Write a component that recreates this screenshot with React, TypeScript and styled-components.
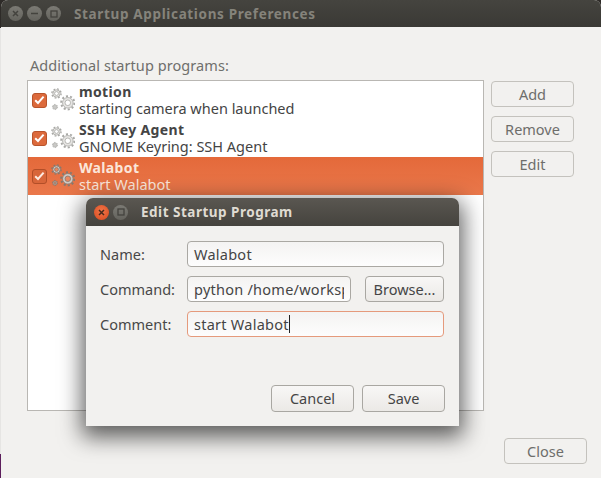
import React from "react";
import styled, { createGlobalStyle } from "styled-components";

const Global = createGlobalStyle`
  html, body { margin: 0; padding: 0; background: #f2f1ef; }
  #root { width: 601px; height: 478px; overflow: hidden; }
  * { box-sizing: border-box; }
`;

const Desktop = styled.div`
  position: relative;
  width: 601px;
  height: 478px;
  overflow: hidden;
  background: linear-gradient(180deg, #2e2b28 0 28px, #e6e5e3 28px 454px, #5c1e5c 454px);
  padding-left: 1px;
  font-family: "Noto Sans", "Open Sans", sans-serif;
  font-size: 14.5px;
  color: #3c3c3c;
`;

const MainWindow = styled.div`
  display: flex;
  flex-direction: column;
  width: 600px;
  height: 478px;
  background: #f2f1ef;
  border-radius: 7px 7px 0 0;
  overflow: hidden;
`;

const TitleBar = styled.div<{ $active?: boolean }>`
  display: flex;
  align-items: center;
  flex: none;
  height: ${(p) => (p.$active ? 28 : 27)}px;
  padding-left: ${(p) => (p.$active ? 8 : 7)}px;
  gap: 3px;
  background: ${(p) =>
    p.$active
      ? "linear-gradient(180deg, #5a5751, #45433e)"
      : "linear-gradient(180deg, #45443f, #3a3935)"};
`;

const TitleText = styled.span<{ $active?: boolean }>`
  margin-left: 10px;
  font-weight: 700;
  font-size: 13.5px;
  letter-spacing: ${(p) => (p.$active ? 0.5 : 0.65)}px;
  color: ${(p) => (p.$active ? "#dfdbd2" : "#85837b")};
`;

const WinBtn = styled.span<{ $kind: "closeDim" | "dim" | "closeActive" }>`
  display: flex;
  align-items: center;
  justify-content: center;
  width: 15px;
  height: 15px;
  border-radius: 50%;
  background: ${(p) =>
    p.$kind === "closeActive"
      ? "radial-gradient(circle at 50% 40%, #f0764a, #d9481c)"
      : "linear-gradient(180deg, #7b7a74, #64635d)"};
  & + & {
    margin-left: 1px;
  }
`;

const Body = styled.div`
  display: flex;
  flex-direction: column;
  flex: 1;
  padding: 28px 14px 15px 26px;
`;

const SectionLabel = styled.div`
  height: 25px;
  padding-left: 3px;
  color: #6f6f6c;
  font-size: 14.5px;
  letter-spacing: 0.07px;
  line-height: 20px;
`;

const Columns = styled.div`
  display: flex;
  gap: 7px;
  height: 331px;
`;

const List = styled.div`
  width: 457px;
  height: 331px;
  background: #fff;
  border: 1px solid #b9b7b3;
`;

const Row = styled.div<{ $selected?: boolean }>`
  display: flex;
  align-items: center;
  height: 38px;
  padding-left: 4px;
  background: ${(p) => (p.$selected ? "linear-gradient(180deg, #e4693a, #ea784b)" : "transparent")};
  color: ${(p) => (p.$selected ? "#fbe6da" : "#444")};
`;

const Check = styled.span<{ $selected?: boolean }>`
  display: flex;
  flex: none;
  align-items: center;
  justify-content: center;
  width: 15px;
  height: 15px;
  border-radius: 3px;
  background: ${(p) => (p.$selected ? "#d8663a" : "#dc6a3c")};
  border: 1px solid ${(p) => (p.$selected ? "#b24e28" : "#b8542c")};
`;

const RowIcon = styled.span`
  display: flex;
  flex: none;
  width: 24px;
  height: 24px;
  margin: 0 4px;
`;

const RowText = styled.div`
  display: flex;
  flex-direction: column;
  line-height: 17px;
  font-size: 14.5px;
`;

const RowName = styled.strong`
  font-weight: 700;
  font-size: 14px;
  letter-spacing: 0.35px;
`;

const RowDesc = styled.span``;

const SideButtons = styled.div`
  display: flex;
  flex-direction: column;
  gap: 9px;
  padding-top: 1px;
`;

const Button = styled.button<{ $w?: number; $dim?: boolean; $tall?: boolean }>`
  width: ${(p) => p.$w ?? 83}px;
  height: ${(p) => (p.$tall ? 27 : 26)}px;
  padding: 0 0 ${(p) => (p.$tall ? 2 : 0)}px;
  border: 1px solid ${(p) => (p.$dim ? "#c4c2bd" : "#a9a7a2")};
  border-radius: 4px;
  background: ${(p) =>
    p.$dim ? "#f2f1ef" : "linear-gradient(180deg, #f8f7f6, #ebe9e6)"};
  color: ${(p) => (p.$dim ? "#6e6e6b" : "#454545")};
  font-family: inherit;
  font-size: 14.5px;
  line-height: 22px;
`;

const BrowseButton = styled(Button)`
  margin-left: 14px;
`;

const Footer = styled.div`
  display: flex;
  justify-content: flex-end;
  margin-top: 27px;
`;

const Dialog = styled.div`
  position: absolute;
  left: 86px;
  top: 198px;
  display: flex;
  flex-direction: column;
  width: 373px;
  height: 228px;
  background: #f2f1ef;
  border-radius: 7px 7px 0 0;
  box-shadow: 0 7px 22px 4px rgba(0, 0, 0, 0.62);
  overflow: hidden;
`;

const Form = styled.div`
  display: flex;
  flex-direction: column;
  flex: 1;
  gap: 9px;
  padding: 15px 14px 14px 14px;
`;

const FormRow = styled.div`
  display: flex;
  align-items: center;
  height: 26px;
`;

const FieldLabel = styled.span`
  flex: none;
  width: 87px;
  color: #484848;
  font-size: 14.5px;
`;

const Input = styled.div<{ $focus?: boolean; $w: number }>`
  display: flex;
  align-items: center;
  width: ${(p) => p.$w}px;
  height: 26px;
  padding: 0 6px;
  border: 1px solid ${(p) => (p.$focus ? "#e59a7c" : "#aaa8a3")};
  border-radius: 4px;
  background: linear-gradient(180deg, #f4f3f2, #fdfdfd);
  color: #454545;
  font-size: 14.5px;
  letter-spacing: 0.25px;
  white-space: nowrap;
`;

const InputText = styled.span`
  min-width: 0;
  overflow: hidden;
`;

const Caret = styled.span`
  flex: none;
  width: 1px;
  height: 18px;
  background: #222;
`;

const FormGap = styled.div`
  flex: 1;
`;

const DialogActions = styled.div`
  display: flex;
  justify-content: flex-end;
  gap: 8px;
`;

const X = () => (
  <svg width="7" height="7" viewBox="0 0 7 7">
    <path d="M1 1l5 5M6 1L1 6" stroke="#4a2a1c" strokeWidth="1.5" />
  </svg>
);

const DimX = () => (
  <svg width="7" height="7" viewBox="0 0 7 7">
    <path d="M1 1l5 5M6 1L1 6" stroke="#44433e" strokeWidth="1.5" />
  </svg>
);

const Minus = () => (
  <svg width="7" height="7" viewBox="0 0 7 7">
    <path d="M0 3.5h7" stroke="#44433e" strokeWidth="1.6" />
  </svg>
);

const Square = () => (
  <svg width="8" height="8" viewBox="0 0 8 8">
    <rect x="1" y="1" width="6" height="6" fill="none" stroke="#44433e" strokeWidth="1.3" />
  </svg>
);

const Tick = ({ selected }: { selected?: boolean }) => (
  <svg width="11" height="10" viewBox="0 0 11 10">
    <path
      d="M1.2 5.2l2.8 2.8 5.6-6.4"
      fill="none"
      stroke={selected ? "#fde9df" : "#fff"}
      strokeWidth="2"
    />
  </svg>
);

type GearProps = { cx: number; cy: number; r: number; teeth: number; fill: string; stroke: string; hole: string };

const Gear = ({ cx, cy, r, teeth, fill, stroke, hole }: GearProps) => {
  const seg = (Math.PI * 2 * r) / (teeth * 2);
  return (
    <g>
      <circle cx={cx} cy={cy} r={r} fill="none" stroke={stroke} strokeWidth={r * 0.3} strokeDasharray={`${seg} ${seg}`} />
      <circle cx={cx} cy={cy} r={r * 0.8} fill={fill} stroke={stroke} strokeWidth="0.8" />
      <circle cx={cx} cy={cy} r={r * 0.42} fill={hole} stroke={stroke} strokeWidth="0.8" />
    </g>
  );
};

const Gears = ({ selected }: { selected?: boolean }) => {
  const fill = selected ? "#cfc9c4" : "#e6e5e3";
  const stroke = selected ? "#85786f" : "#a9a9a6";
  const hole = selected ? "#e9875f" : "#ffffff";
  return (
    <svg width="24" height="24" viewBox="0 0 24 24">
      <Gear cx={5.5} cy={5.5} r={4.6} teeth={8} fill={fill} stroke={stroke} hole={hole} />
      <Gear cx={16.8} cy={14.8} r={6.6} teeth={10} fill={fill} stroke={stroke} hole={hole} />
      <Gear cx={4} cy={19} r={2.6} teeth={6} fill={fill} stroke={stroke} hole={hole} />
    </svg>
  );
};

const programs = [
  { name: "motion", desc: "starting camera when launched" },
  { name: "SSH Key Agent", desc: "GNOME Keyring: SSH Agent" },
  { name: "Walabot", desc: "start Walabot", selected: true },
];

export default function App() {
  return (
    <Desktop>
      <Global />
      <MainWindow>
        <TitleBar>
          <WinBtn $kind="closeDim"><DimX /></WinBtn>
          <WinBtn $kind="dim"><Minus /></WinBtn>
          <WinBtn $kind="dim"><Square /></WinBtn>
          <TitleText>Startup Applications Preferences</TitleText>
        </TitleBar>
        <Body>
          <SectionLabel>Additional startup programs:</SectionLabel>
          <Columns>
            <List>
              {programs.map((p) => (
                <Row key={p.name} $selected={p.selected}>
                  <Check $selected={p.selected}><Tick selected={p.selected} /></Check>
                  <RowIcon><Gears selected={p.selected} /></RowIcon>
                  <RowText>
                    <RowName>{p.name}</RowName>
                    <RowDesc>{p.desc}</RowDesc>
                  </RowText>
                </Row>
              ))}
            </List>
            <SideButtons>
              <Button $dim>Add</Button>
              <Button $dim>Remove</Button>
              <Button $dim>Edit</Button>
            </SideButtons>
          </Columns>
          <Footer>
            <Button $dim>Close</Button>
          </Footer>
        </Body>
      </MainWindow>
      <Dialog>
        <TitleBar $active>
          <WinBtn $kind="closeActive"><X /></WinBtn>
          <WinBtn $kind="dim"><Square /></WinBtn>
          <TitleText $active>Edit Startup Program</TitleText>
        </TitleBar>
        <Form>
          <FormRow>
            <FieldLabel>Name:</FieldLabel>
            <Input $w={257}>Walabot</Input>
          </FormRow>
          <FormRow>
            <FieldLabel>Command:</FieldLabel>
            <Input $w={164}><InputText>python /home/worksp</InputText></Input>
            <BrowseButton $w={79}>Browse...</BrowseButton>
          </FormRow>
          <FormRow>
            <FieldLabel>Comment:</FieldLabel>
            <Input $w={257} $focus>start Walabot<Caret /></Input>
          </FormRow>
          <FormGap />
          <DialogActions>
            <Button $tall>Cancel</Button>
            <Button $tall>Save</Button>
          </DialogActions>
        </Form>
      </Dialog>
    </Desktop>
  );
}
